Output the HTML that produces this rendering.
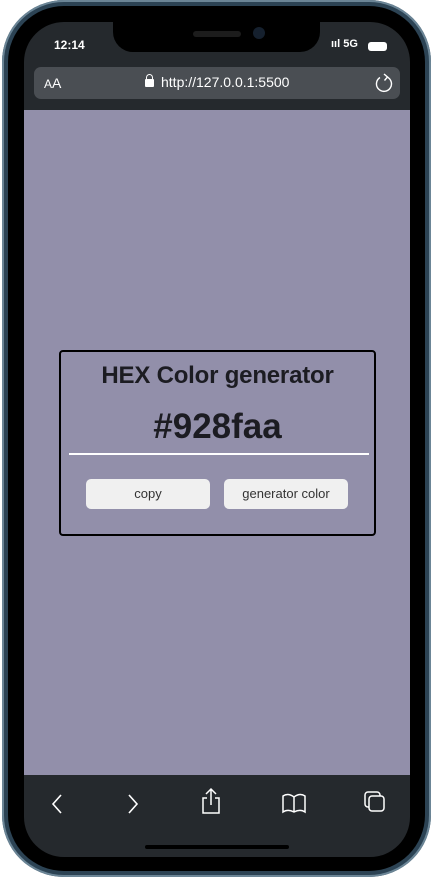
<!DOCTYPE html>
<html><head><meta charset="utf-8"><style>
*{margin:0;padding:0;box-sizing:border-box}
html,body{width:433px;height:877px;background:#fff;overflow:hidden;font-family:"Liberation Sans",sans-serif}
.frame{position:absolute;left:2px;top:0;width:429px;height:877px;border-radius:62px;background:#2c4354;box-shadow:inset 0 0 0 2px #6b8596}
.bezel{position:absolute;left:8px;top:6px;width:417px;height:865px;border-radius:56px;background:#000}
.screen{position:absolute;left:24px;top:22px;width:386px;height:835px;border-radius:40px;background:#25292d;overflow:hidden}
.spk{position:absolute;left:193px;top:31px;width:48px;height:6px;border-radius:3px;background:#1c1c1c}
.cam{position:absolute;left:253px;top:27px;width:12px;height:12px;border-radius:50%;background:#15202e}
.time{position:absolute;left:54px;top:38px;color:#fff;font-size:12px;font-weight:bold}
.sig{position:absolute;left:331px;top:38px;color:#fff;font-size:11px;font-weight:bold}
.bat{position:absolute;left:368px;top:42px;width:19px;height:9px;border-radius:3px;background:#fff}
.url{position:absolute;left:34px;top:67px;width:366px;height:32px;border-radius:7px;background:#4a4e53;color:#fff}
.page{position:absolute;left:24px;top:110px;width:386px;height:665px;background:#928faa}
.card{position:absolute;left:59px;top:350px;width:317px;height:186px;border:2px solid #000;border-radius:4px}
.title{position:absolute;left:0;right:0;top:10px;text-align:center;font-size:24px;font-weight:bold;color:#1c1c22;letter-spacing:-0.2px}
.hex{position:absolute;left:0;right:0;top:55px;text-align:center;font-size:35px;font-weight:bold;color:#1c1c22}
.line{position:absolute;left:8px;top:101px;width:300px;height:2px;background:#fff}
.btn{position:absolute;top:127px;width:124px;height:30px;border-radius:5px;background:#f0f0f0;color:#333;font-size:13px;text-align:center;line-height:30px}
.bar svg{position:absolute}
.home{position:absolute;left:145px;top:845px;width:144px;height:4px;border-radius:2px;background:#000}
</style></head><body>
<div class="frame"></div>
<div class="bezel"></div>
<div class="screen"></div>
<div class="page"></div>
<div style="position:absolute;left:113px;top:22px;width:207px;height:30px;background:#000;border-radius:0 0 20px 20px"></div>
<div class="spk"></div><div class="cam"></div>
<div class="time">12:14</div>
<div class="sig">ııl 5G</div>
<div class="bat"></div>
<div class="url">
 <span style="position:absolute;left:10px;top:8px;font-size:12px">A<span style="font-size:14px">A</span></span>
 <span style="position:absolute;left:111px;top:12px;width:9px;height:8px;background:#fff;border-radius:1px"></span>
 <span style="position:absolute;left:112px;top:7px;width:7px;height:8px;border:1.5px solid #fff;border-radius:4px 4px 0 0"></span>
 <span style="position:absolute;left:127px;top:7px;font-size:14px">http://127.0.0.1:5500</span>
 <svg style="position:absolute;left:340px;top:5px" width="20" height="22" viewBox="0 0 20 22"><path d="M13 5 A7.5 7.5 0 1 1 6 5.5" fill="none" stroke="#fff" stroke-width="1.4"/><path d="M10 2 L13.5 5 L10.5 8.5" fill="none" stroke="#fff" stroke-width="1.4"/></svg>
</div>
<div class="card">
 <div class="title">HEX Color generator</div>
 <div class="hex">#928faa</div>
 <div class="line"></div>
 <div class="btn" style="left:25px">copy</div>
 <div class="btn" style="left:163px">generator color</div>
</div>
<div class="bar">
<svg style="left:50px;top:793px" width="14" height="22"><path d="M11 2 L3 11 L11 20" fill="none" stroke="#fff" stroke-width="1.6"/></svg>
<svg style="left:126px;top:793px" width="14" height="22"><path d="M3 2 L11 11 L3 20" fill="none" stroke="#fff" stroke-width="1.6"/></svg>
<svg style="left:200px;top:787px" width="22" height="28"><path d="M7 11 H3 V26 H19 V11 H15 M11 18 V2 M6 7 L11 2 L16 7" fill="none" stroke="#fff" stroke-width="1.5"/></svg>
<svg style="left:281px;top:792px" width="26" height="22"><path d="M13 5 C9 2 5 2 2 4 V20 C5 18 9 18 13 20 C17 18 21 18 24 20 V4 C21 2 17 2 13 5 V20" fill="none" stroke="#fff" stroke-width="1.5"/></svg>
<svg style="left:363px;top:790px" width="24" height="24"><rect x="2" y="2" width="15" height="15" rx="3" fill="none" stroke="#fff" stroke-width="1.5"/><rect x="6" y="6" width="15" height="15" rx="3" fill="#25292d" stroke="#fff" stroke-width="1.5"/></svg>
</div>
<div class="home"></div>
</body></html>
